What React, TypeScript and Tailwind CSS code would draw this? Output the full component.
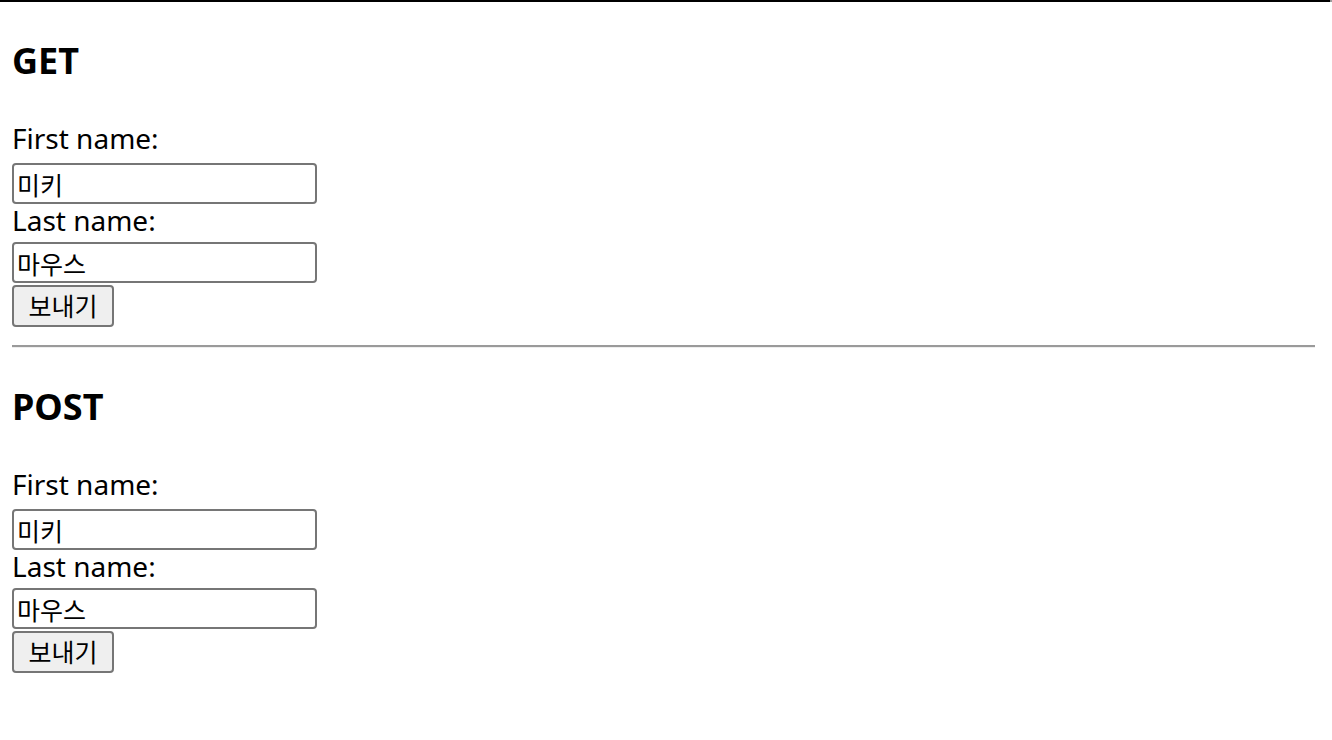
import React from "react";

function NameForm({ title }: { title: string }) {
  return (
    <section>
      <h2 className="mt-[34px] text-[36px] font-bold leading-[49px] text-black">{title}</h2>
      <form className="flex flex-col items-start" onSubmit={(e) => e.preventDefault()}>
        <label className="mt-[37px] text-[28px] leading-[33px] text-black">First name:</label>
        <input
          type="text"
          defaultValue="미키"
          className="mt-[8px] h-[41px] w-[305px] rounded-[4px] border-2 border-[#767676] bg-white px-[3px] text-[25px] text-black outline-none"
        />
        <label className="text-[28px] leading-[33px] text-black">Last name:</label>
        <input
          type="text"
          defaultValue="마우스"
          className="mt-[5px] h-[41px] w-[305px] rounded-[4px] border-2 border-[#767676] bg-white px-[3px] text-[25px] text-black outline-none"
        />
        <button
          type="submit"
          className="mt-[2px] h-[42px] w-[102px] rounded-[4px] border-2 border-[#767676] bg-[#efefef] text-[25px] leading-none text-black"
        >
          보내기
        </button>
      </form>
    </section>
  );
}

export default function App() {
  return (
    <div
      className="min-h-[740px] w-full bg-white"
      style={{ fontFamily: '"Noto Sans", "Noto Sans CJK KR", sans-serif' }}
    >
      <div className="flex h-[2px] w-full">
        <div className="h-full flex-1 bg-black" />
        <div className="h-full w-[2px] bg-[#9a9a9a]" />
      </div>
      <div className="pl-[12px] pr-[17px]">
        <NameForm title="GET" />
        <div className="mt-[18px] h-[3px] w-full border-b border-[#eeeeee] bg-[#9a9a9a]" />
        <NameForm title="POST" />
      </div>
    </div>
  );
}
